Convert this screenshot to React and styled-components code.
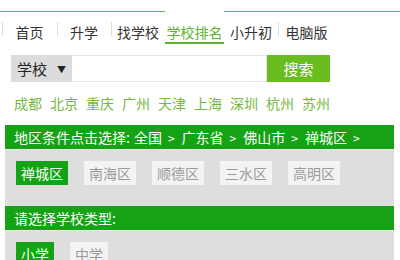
import React from "react";
import styled, { createGlobalStyle } from "styled-components";

const GlobalStyle = createGlobalStyle`
  body {
    margin: 0;
    background: #fff;
    font-family: "Noto Sans CJK SC", "Noto Sans", sans-serif;
  }
`;

const tabs = [
  { name: "首页", width: 55 },
  { name: "升学", width: 54 },
  { name: "找学校", width: 54 },
  { name: "学校排名", width: 59, active: true },
  { name: "小升初", width: 54, noLine: true },
  { name: "电脑版", width: 57 },
];

const cities = ["成都", "北京", "重庆", "广州", "天津", "上海", "深圳", "杭州", "苏州"];
const districts = ["禅城区", "南海区", "顺德区", "三水区", "高明区"];
const types = ["小学", "中学"];

const App = () => {
  return (
    <Page>
      <GlobalStyle />
      <Nav>
        <NavFill $w={2} />
        {tabs.map((t) => (
          <Tab key={t.name} $w={t.width} $active={t.active} $noLine={t.noLine}>
            {t.name}
          </Tab>
        ))}
        <NavFill />
      </Nav>

      <SearchRow>
        <Select>
          学校<Arrow>▼</Arrow>
        </Select>
        <Input />
        <SearchBtn>搜索</SearchBtn>
      </SearchRow>

      <Cities>
        {cities.map((c) => (
          <City key={c}>{c}</City>
        ))}
      </Cities>

      <Box>
        <Bar>
          地区条件点击选择:<Crumb>全国</Crumb>
          <Gt>&gt;</Gt>
          广东省<Gt>&gt;</Gt>
          佛山市<Gt>&gt;</Gt>
          禅城区<Gt>&gt;</Gt>
        </Bar>
        <Panel>
          {districts.map((d, i) => (
            <Chip key={d} $active={i === 0}>
              {d}
            </Chip>
          ))}
        </Panel>
        <Bar>请选择学校类型:</Bar>
        <Panel>
          {types.map((d, i) => (
            <Chip key={d} $active={i === 0}>
              {d}
            </Chip>
          ))}
        </Panel>
      </Box>
    </Page>
  );
};

const Page = styled.div`
  width: 400px;
  height: 260px;
  overflow: hidden;
  padding-top: 11px;
  box-sizing: border-box;
`;

const Nav = styled.div`
  display: flex;
  height: 33px;
`;

const NavFill = styled.div`
  ${(p) => (p.$w ? `width: ${p.$w}px;` : "flex: 1;")}
  border-top: 1px solid #62bb45;
`;

const Tab = styled.div`
  position: relative;
  width: ${(p) => p.$w}px;
  text-align: center;
  font-size: 14px;
  line-height: 20px;
  padding-top: 10px;
  box-sizing: border-box;
  color: ${(p) => (p.$active ? "#5cb531" : "#333")};
  border-top: 1px solid ${(p) => (p.$active ? "transparent" : "#62bb45")};
  border-bottom: 2px solid ${(p) => (p.$active ? "#5cb531" : "transparent")};

  &::before {
    content: "";
    position: absolute;
    left: 0;
    top: 10px;
    height: 14px;
    border-left: 1px solid #dcdcdc;
    display: ${(p) => (p.$active || p.$noLine ? "none" : "block")};
  }
`;

const SearchRow = styled.div`
  display: flex;
  margin: 11px 0 0 11px;
  height: 27px;
`;

const Select = styled.div`
  width: 61px;
  background: #dcdcdc;
  font-size: 15px;
  line-height: 27px;
  padding-left: 6px;
  box-sizing: border-box;
  color: #222;
`;

const Arrow = styled.span`
  font-size: 9px;
  margin-left: 10px;
  vertical-align: 2px;
`;

const Input = styled.div`
  width: 194px;
  border: 1px solid #e6e6e6;
  border-left: none;
  background: #fff;
`;

const SearchBtn = styled.div`
  width: 63px;
  background: #69bd1e;
  color: #fff;
  font-size: 15px;
  line-height: 27px;
  text-align: center;
`;

const Cities = styled.div`
  display: flex;
  gap: 8px;
  margin: 11px 0 0 14px;
  height: 20px;
`;

const City = styled.span`
  font-size: 14px;
  line-height: 20px;
  color: #76b83c;
`;

const Box = styled.div`
  margin: 12px 6px 0 5px;
  background: #dedede;
`;

const Bar = styled.div`
  height: 24px;
  line-height: 24px;
  background: #15a315;
  color: #fff;
  font-size: 14px;
  padding-left: 9px;
  white-space: nowrap;
  border-bottom: 1px solid #e8e8e8;
`;

const Crumb = styled.span`
  margin-left: 4px;
`;

const Gt = styled.span`
  display: inline-block;
  margin: 0 7px 0 6px;
  font-size: 12px;
`;

const Panel = styled.div`
  display: flex;
  gap: 16px;
  padding: 11px 11px 21px;
`;

const Chip = styled.div`
  height: 24px;
  line-height: 24px;
  padding: 0 5px;
  font-size: 14px;
  background: ${(p) => (p.$active ? "#15a315" : "#f3f3f3")};
  color: ${(p) => (p.$active ? "#fff" : "#9a9a9a")};
`;

export default App;
